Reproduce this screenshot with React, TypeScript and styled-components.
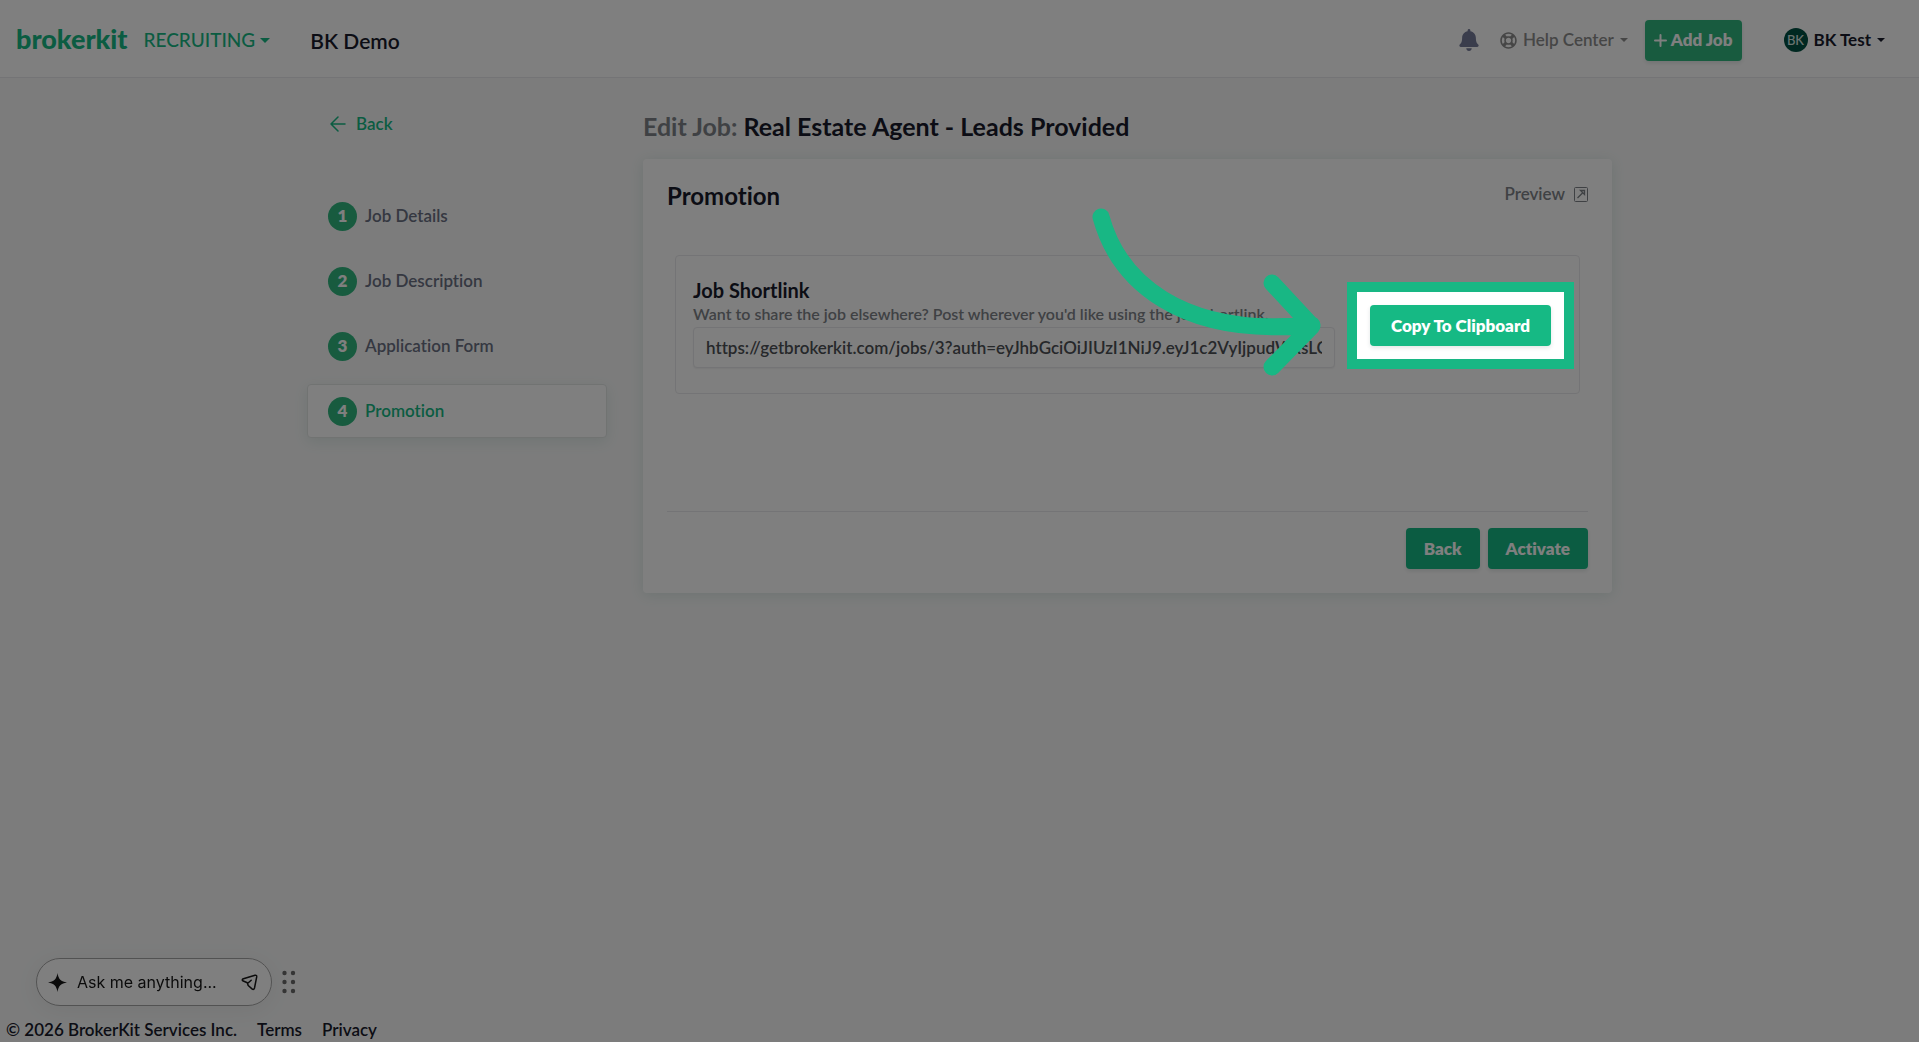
import React from 'react';
import styled, { createGlobalStyle } from 'styled-components';
import { FaBell, FaRegLifeRing } from 'react-icons/fa';

const color = {
  brand: '#16b984',
  brandSoft: '#30b67f',
  ink: '#181a2b',
  slate: '#6b7083',
  grey: '#7e8388',
  line: '#e9e9ec',
  page: '#f8f9f9',
};

const GlobalStyle = createGlobalStyle`
  *, *::before, *::after { box-sizing: border-box; }
  body {
    margin: 0;
    background: ${color.page};
    color: ${color.ink};
    font: 600 17px/24px Lato, "Open Sans", sans-serif;
    font-variant-ligatures: none;
  }
  h1, h2, h3, p, ol { margin: 0; padding: 0; }
  a { color: inherit; text-decoration: none; }
  button, input { font: inherit; font-variant-ligatures: none; }
`;

const Page = styled.div`
  display: flex;
  flex-direction: column;
  min-height: 100vh;
`;

const Navbar = styled.header`
  display: flex;
  align-items: center;
  height: 78px;
  padding: 0 34px 0 16px;
  background: #fff;
  border-bottom: 1px solid ${color.line};
`;

const Logo = styled.a`
  color: ${color.brand};
  font-size: 27px;
  font-weight: 900;
  line-height: 32px;
`;

const PlainButton = styled.button`
  display: inline-flex;
  align-items: center;
  padding: 0;
  border: 0;
  background: none;
  color: inherit;
  cursor: pointer;
`;

const Caret = styled.span<{ $size: number }>`
  border: ${(p) => p.$size}px solid transparent;
  border-top-color: currentColor;
  border-bottom: 0;
`;

const ProductSwitch = styled(PlainButton)`
  gap: 5px;
  margin-left: 16px;
  padding-top: 3px;
  color: ${color.brand};
  font-size: 19px;
  font-weight: 500;
`;

const Company = styled.span`
  margin-left: 40px;
  padding-top: 4px;
  font-size: 21px;
`;

const NavEnd = styled.nav`
  display: flex;
  align-items: center;
  margin-left: auto;
  padding-top: 3px;
`;

const BellButton = styled(PlainButton)`
  color: #747a98;
  font-size: 22px;
`;

const HelpButton = styled(PlainButton)`
  gap: 6px;
  margin: 0 17px 0 20px;
  color: #8c8c8c;

  svg {
    font-size: 17px;
  }
`;

const Button = styled.button<{ $soft?: boolean; $pad: number }>`
  display: inline-flex;
  align-items: center;
  justify-content: center;
  gap: 4px;
  height: 41px;
  padding: 0 ${(p) => p.$pad}px;
  border: 0;
  border-radius: 4px;
  background: ${(p) => (p.$soft ? color.brandSoft : color.brand)};
  box-shadow: 0 2px 4px rgba(20, 60, 50, 0.12);
  color: #fff;
  font-weight: 800;
  white-space: nowrap;
  cursor: pointer;
`;

const UserButton = styled(PlainButton)`
  gap: 6px;
  margin-left: 42px;
  font-weight: 700;
`;

const Avatar = styled.span`
  display: grid;
  place-items: center;
  width: 24px;
  height: 24px;
  border-radius: 50%;
  background: #005042;
  color: #d6e6e2;
  font-size: 13px;
  font-weight: 500;
`;

const Container = styled.div`
  display: flex;
  gap: 36px;
  width: 100%;
  max-width: 1305px;
  margin: 0 auto;
`;

const Sidebar = styled.aside`
  flex: 0 0 300px;
  padding-top: 34px;
`;

const BackLink = styled.a`
  display: inline-flex;
  align-items: center;
  gap: 10px;
  margin-left: 23px;
  color: ${color.brand};
`;

const Steps = styled.ol`
  display: flex;
  flex-direction: column;
  gap: 11px;
  margin-top: 51px;
  list-style: none;
`;

const Step = styled.a<{ $active?: boolean }>`
  display: flex;
  align-items: center;
  gap: 8px;
  height: 54px;
  padding-left: 20px;
  border: 1px solid ${(p) => (p.$active ? '#e2e6e5' : 'transparent')};
  border-radius: 4px;
  background: ${(p) => (p.$active ? '#fff' : 'none')};
  box-shadow: ${(p) => (p.$active ? '0 4px 14px rgba(20, 110, 80, 0.1)' : 'none')};
  color: ${(p) => (p.$active ? color.brand : color.slate)};
`;

const StepNumber = styled.span`
  width: 29px;
  height: 29px;
  border-radius: 50%;
  background: ${color.brandSoft};
  color: #fff;
  font-weight: 800;
  line-height: 28px;
  text-align: center;
`;

const Main = styled.main`
  flex: 1;
  min-width: 0;
  padding-top: 32px;
`;

const Title = styled.h1`
  font-size: 25px;
  font-weight: 700;
  line-height: 32px;

  span {
    color: ${color.grey};
  }
`;

const Card = styled.section`
  margin-top: 17px;
  padding: 23px 24px 24px;
  border-radius: 4px;
  background: #fff;
  box-shadow: 0 2px 14px rgba(20, 110, 80, 0.12);
`;

const CardHeader = styled.div`
  display: flex;
  justify-content: space-between;
  align-items: flex-start;

  h2 {
    font-size: 24px;
    font-weight: 700;
    line-height: 28px;
  }
`;

const PreviewLink = styled.a`
  display: inline-flex;
  align-items: center;
  gap: 9px;
  color: ${color.grey};
`;

const Shortlink = styled.div`
  display: flex;
  align-items: flex-start;
  margin: 45px 8px 0;
  padding: 22px 28px 25px 17px;
  border: 1px solid ${color.line};
  border-radius: 4px;
`;

const Field = styled.div`
  flex: 1;
  min-width: 0;

  h3 {
    font-size: 20px;
    font-weight: 700;
    line-height: 24px;
  }

  label {
    display: block;
    color: ${color.grey};
    font-size: 16px;
  }
`;

const UrlInput = styled.input`
  display: block;
  width: 100%;
  height: 41px;
  margin-top: 1px;
  padding: 0 12px;
  border: 1px solid ${color.line};
  border-radius: 4px;
  background: #fff;
  box-shadow: 0 1px 2px rgba(0, 0, 0, 0.06);
  color: #4d5055;
`;

const CopyArea = styled.div`
  position: relative;
  z-index: 10;
  margin: 27px 0 0 35px;
`;

const Spotlight = styled.div`
  position: absolute;
  inset: -23px;
  border: 10px solid #18b784;
  box-shadow: 0 0 0 9999px rgba(0, 0, 0, 0.5);
  pointer-events: none;
`;

const Arrow = styled.svg`
  position: absolute;
  right: 226px;
  top: -100px;
  fill: none;
  stroke: #18b784;
  stroke-width: 17;
  stroke-linecap: round;
  stroke-linejoin: round;
  pointer-events: none;
`;

const CardFooter = styled.div`
  display: flex;
  justify-content: flex-end;
  gap: 8px;
  margin-top: 117px;
  padding-top: 16px;
  border-top: 1px solid ${color.line};
`;

const AskDock = styled.form`
  position: fixed;
  left: 36px;
  bottom: 36px;
  display: flex;
  align-items: center;
  gap: 10px;
`;

const AskPill = styled.div`
  display: flex;
  align-items: center;
  gap: 10px;
  width: 236px;
  height: 48px;
  padding: 0 13px 0 11px;
  border: 1px solid #a5a5a5;
  border-radius: 24px;
  background: #fff;
  box-shadow: 0 4px 24px rgba(0, 0, 0, 0.06);
  color: #161616;

  input {
    flex: 1;
    min-width: 0;
    padding: 0;
    border: 0;
    background: none;
    font: 400 16px/24px Inter, sans-serif;
  }

  input::placeholder {
    color: #161616;
    opacity: 1;
  }
`;

const Footer = styled.footer`
  display: flex;
  gap: 20px;
  margin-top: auto;
  padding-left: 6px;
`;

const steps = ['Job Details', 'Job Description', 'Application Form', 'Promotion'];

const shortlink =
  'https://getbrokerkit.com/jobs/3?auth=eyJhbGciOiJIUzI1NiJ9.eyJ1c2VyIjpudWxsLCJvd25lciI6bnVsbH0';

export default function App() {
  return (
    <Page>
      <GlobalStyle />
      <Navbar>
        <Logo href="#">brokerkit</Logo>
        <ProductSwitch type="button">
          RECRUITING <Caret $size={5} />
        </ProductSwitch>
        <Company>BK Demo</Company>
        <NavEnd>
          <BellButton type="button" aria-label="Notifications">
            <FaBell />
          </BellButton>
          <HelpButton type="button">
            <FaRegLifeRing />
            Help Center <Caret $size={4} />
          </HelpButton>
          <Button type="button" $soft $pad={9}>
            <svg width="13" height="13" viewBox="0 0 13 13" stroke="currentColor" strokeWidth="2" strokeLinecap="round">
              <path d="M6.500 1v11M1 6.500h11" />
            </svg>
            Add Job
          </Button>
          <UserButton type="button">
            <Avatar>BK</Avatar>
            BK Test <Caret $size={4} />
          </UserButton>
        </NavEnd>
      </Navbar>

      <Container>
        <Sidebar>
          <BackLink href="#">
            <svg width="16" height="16" viewBox="0 0 16 16" fill="none" stroke="currentColor" strokeWidth="1.500" strokeLinecap="round" strokeLinejoin="round">
              <path d="M15 8H1M8 1L1 8l7 7" />
            </svg>
            Back
          </BackLink>
          <Steps>
            {steps.map((name, i) => (
              <li key={name}>
                <Step href="#" $active={i === 3}>
                  <StepNumber>{i + 1}</StepNumber>
                  {name}
                </Step>
              </li>
            ))}
          </Steps>
        </Sidebar>

        <Main>
          <Title>
            <span>Edit Job:</span> Real Estate Agent - Leads Provided
          </Title>
          <Card>
            <CardHeader>
              <h2>Promotion</h2>
              <PreviewLink href="#">
                Preview
                <svg width="14" height="15" viewBox="0 0 14 15" fill="none" stroke="currentColor">
                  <rect x="0.500" y="0.500" width="13" height="14" rx="1" />
                  <path d="M3.500 11L8.500 6M6.500 3.500h4v4z" strokeWidth="1.300" />
                </svg>
              </PreviewLink>
            </CardHeader>

            <Shortlink>
              <Field>
                <h3>Job Shortlink</h3>
                <label htmlFor="shortlink">
                  Want to share the job elsewhere? Post wherever you'd like using the job shortlink.
                </label>
                <UrlInput id="shortlink" readOnly value={shortlink} />
              </Field>
              <CopyArea>
                <Button type="button" $pad={21}>
                  Copy To Clipboard
                </Button>
                <Spotlight />
                <Arrow width="235" height="175" viewBox="0 0 235 175">
                  <path d="M11 12C28 74 88 133 222 120M182 78l40 43l-40 41" />
                </Arrow>
              </CopyArea>
            </Shortlink>

            <CardFooter>
              <Button type="button" $pad={18}>
                Back
              </Button>
              <Button type="button" $pad={18}>
                Activate
              </Button>
            </CardFooter>
          </Card>
        </Main>
      </Container>

      <AskDock>
        <AskPill>
          <svg width="19" height="19" viewBox="0 0 20 20" fill="currentColor">
            <path d="M10 0C10.800 6.200 13.800 9.200 20 10C13.800 10.800 10.800 13.800 10 20C9.200 13.800 6.200 10.800 0 10C6.200 9.200 9.200 6.200 10 0Z" />
          </svg>
          <input type="text" aria-label="Ask me anything" placeholder="Ask me anything..." />
          <PlainButton type="button" aria-label="Send">
            <svg width="17" height="17" viewBox="0 0 17 17" fill="none" stroke="currentColor" strokeWidth="1.500" strokeLinecap="round" strokeLinejoin="round">
              <path d="M2.400 4.800L14 1.300Q16 .9 15.700 2.900L13.500 14Q12.800 16.300 11 14.900L7.200 11.500L6.300 8.700L1.700 6.800Q.5 5.600 2.400 4.800ZM6.500 9.500L10.200 6.200" />
            </svg>
          </PlainButton>
        </AskPill>
        <PlainButton type="button" aria-label="Move">
          <svg width="14" height="24" viewBox="0 0 14 24" fill="#6a6a6a">
            {[3, 12, 21].map((y) => (
              <React.Fragment key={y}>
                <circle cx="2.500" cy={y} r="2.200" />
                <circle cx="11" cy={y} r="2.200" />
              </React.Fragment>
            ))}
          </svg>
        </PlainButton>
      </AskDock>

      <Footer>
        <span>© 2026 BrokerKit Services Inc.</span>
        <a href="#">Terms</a>
        <a href="#">Privacy</a>
      </Footer>
    </Page>
  );
}
